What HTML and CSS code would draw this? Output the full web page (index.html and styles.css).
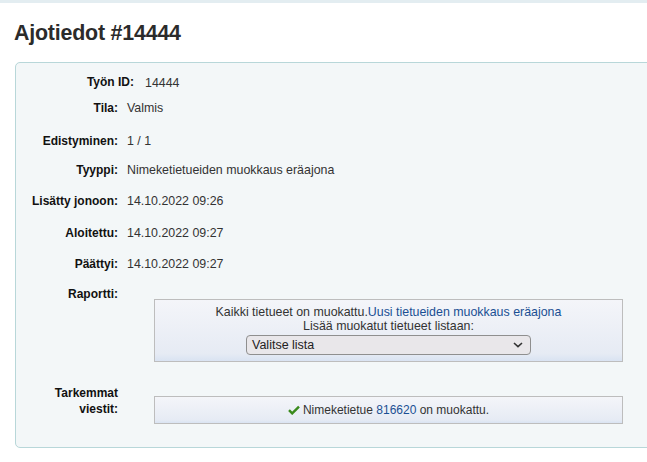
FILE: index.html
```html
<!DOCTYPE html>
<html lang="fi">
<head>
<meta charset="utf-8">
<title>Ajotiedot #14444</title>
<link rel="stylesheet" href="styles.css">
</head>
<body>
<div class="topbar"></div>
<main class="main">
  <h1 class="title">Ajotiedot #14444</h1>
  <fieldset class="rows">
    <div class="row r1"><span class="lbl">Työn ID:</span><span class="val id">14444</span></div>
    <div class="row r2"><span class="lbl">Tila:</span><span class="val">Valmis</span></div>
    <div class="row r3"><span class="lbl">Edistyminen:</span><span class="val">1 / 1</span></div>
    <div class="row r4"><span class="lbl">Tyyppi:</span><span class="val">Nimeketietueiden muokkaus eräajona</span></div>
    <div class="row r5"><span class="lbl">Lisätty jonoon:</span><span class="val">14.10.2022 09:26</span></div>
    <div class="row r6"><span class="lbl">Aloitettu:</span><span class="val">14.10.2022 09:27</span></div>
    <div class="row r7"><span class="lbl">Päättyi:</span><span class="val">14.10.2022 09:27</span></div>
    <div class="row block"><span class="lbl">Raportti:</span>
      <div class="val">
        <div class="dialog">
          <div>Kaikki tietueet on muokattu.<a href="#" class="link">Uusi tietueiden muokkaus eräajona</a></div>
          <div>Lisää muokatut tietueet listaan:</div>
          <div class="select"><span>Valitse lista</span>
            <svg class="chev" width="10" height="6" viewBox="0 0 10 6"><path d="M1 1l4 3.6L9 1" fill="none" stroke="#333" stroke-width="1.6"/></svg>
          </div>
        </div>
      </div>
    </div>
    <div class="row block last"><span class="lbl">Tarkemmat<br>viestit:</span>
      <div class="val">
        <div class="dialog msg">
          <svg class="check" width="12" height="10" viewBox="0 0 12 10"><path d="M1 5.2l3.2 3.2L11 1.6" fill="none" stroke="#3a8a1c" stroke-width="2.4"/></svg>Nimeketietue <a href="#" class="link">816620</a> on muokattu.
        </div>
      </div>
    </div>
  </fieldset>
</main>
</body>
</html>
```
FILE: styles.css
```css
html, body {
  margin: 0;
  padding: 0;
  background: #ffffff;
  overflow: hidden;
}
body {
  font-family: "Liberation Sans", Arial, sans-serif;
  font-size: 12.4px;
  color: #333333;
}
.topbar {
  height: 3px;
  background: #e3edf1;
}
.main {
  padding: 0 0 0 14px;
}
.title {
  margin: 0;
  padding-top: 18px;
  height: 41px;
  font-size: 21.4px;
  font-weight: bold;
  line-height: 24px;
  color: #2b2b2b;
  letter-spacing: -0.2px;
}
.rows {
  box-sizing: border-box;
  margin: 0 0 0 1px;
  padding: 11px 0 23px 0;
  width: 660px;
  border: 1px solid #b8d7d9;
  border-radius: 5px;
  background: #f3f7f8;
  min-inline-size: 0;
}
.row {
  display: flex;
  align-items: flex-start;
  line-height: 16px;
}
.lbl {
  flex: 0 0 102px;
  text-align: right;
  font-weight: bold;
  font-size: 12px;
  color: #111111;
  margin-right: 9px;
}
.val {
  color: #333333;
}
.r1 .lbl {
  flex-basis: 118px;
  margin-right: 11px;
}
.val.id {
  position: relative;
  top: 1px;
}
.r1 { height: 26px; }
.r2 { height: 33px; }
.r3 { height: 29px; }
.r4 { height: 31px; }
.r5 { height: 32px; }
.r6 { height: 31px; }
.r7 { height: 30px; }
.block .val {
  padding-top: 13px;
  padding-left: 27px;
}
.block {
  margin-bottom: 23px;
}
.block.last {
  margin-bottom: 0;
}
.block.last .val {
  padding-top: 11px;
}
.dialog {
  box-sizing: border-box;
  width: 469px;
  border: 1px solid #bdbdbd;
  background: linear-gradient(#f4f5f9 0%, #e6ebf4 88%, #d9e3f2 100%);
  text-align: center;
  padding: 5px 0 6px 0;
  line-height: 14px;
  color: #333333;
}
.link {
  color: #1a4f93;
  text-decoration: none;
}
.select {
  box-sizing: border-box;
  position: relative;
  width: 285px;
  height: 20px;
  margin: 2px auto 0 auto;
  border: 1px solid #8f8f8f;
  border-radius: 4px;
  background: #e9e7ea;
  text-align: left;
  font-size: 12.5px;
  line-height: 18px;
  padding-left: 5px;
  color: #222222;
}
.chev {
  position: absolute;
  right: 7px;
  top: 6px;
}
.msg {
  height: 28px;
  line-height: 26px;
  padding: 0;
  font-size: 12px;
}
.check {
  vertical-align: -1px;
  margin-right: 3px;
}
```
